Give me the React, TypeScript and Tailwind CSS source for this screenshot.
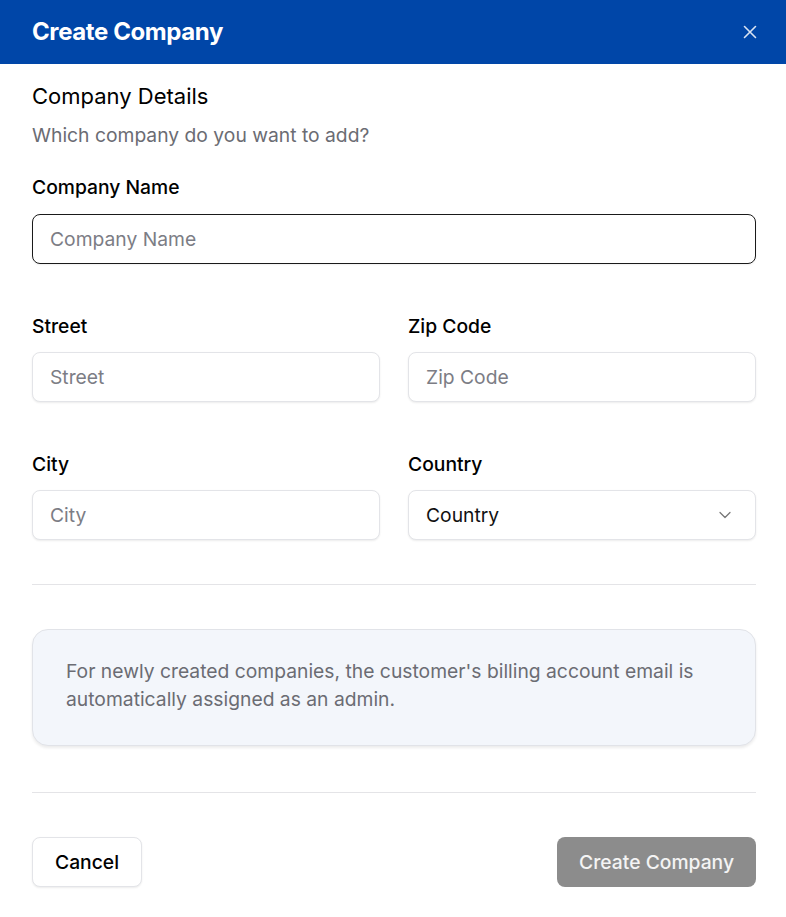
import { ChevronDown } from 'lucide-react';

function Field({ label, placeholder, focused }: { label: string; placeholder: string; focused?: boolean }) {
  return (
    <div className="flex flex-col">
      <label className="text-[19.3px] leading-[24px] font-medium text-black">{label}</label>
      <input
        type="text"
        placeholder={placeholder}
        className={
          focused
            ? 'mt-[15px] h-[50px] w-full rounded-lg border border-[#1a1a1a] bg-white px-[17px] text-[19.3px] text-black outline-none placeholder:text-[#7c7d85] shadow-[0_1px_2px_rgba(0,0,0,0.06)]'
            : 'mt-[14px] h-[50px] w-full rounded-lg border border-[#e3e4e8] bg-white px-[17px] text-[19.3px] text-black outline-none placeholder:text-[#7c7d85] shadow-[0_1px_2px_rgba(0,0,0,0.08)]'
        }
      />
    </div>
  );
}

export default function App() {
  return (
    <div className="min-h-[917px] w-[786px] bg-white" style={{ fontFamily: 'Inter, "Noto Sans", sans-serif' }}>
      {/* Header */}
      <div className="flex h-16 items-center justify-between bg-[#0046a8] pl-8 pr-[24px]">
        <h1 className="text-[24px] font-bold tracking-[-0.4px] text-white">Create Company</h1>
        <button aria-label="Close" className="flex h-6 w-6 items-center justify-center text-white/85">
          <svg width="14" height="14" viewBox="0 0 14 14" fill="none" stroke="currentColor" strokeWidth="1.6" strokeLinecap="round">
            <path d="M1.5 1.5l11 11M12.5 1.5l-11 11" />
          </svg>
        </button>
      </div>

      <div className="pl-8 pr-[30px]">
        <h2 className="mt-[18px] text-[22px] leading-[28px] font-normal text-black">Company Details</h2>
        <p className="mt-[13px] text-[19.3px] leading-[24px] text-[#6b6c73]">Which company do you want to add?</p>

        <div className="mt-[28px]">
          <Field label="Company Name" placeholder="Company Name" focused />
        </div>

        <div className="mt-[50px] grid grid-cols-2 gap-x-[28px] gap-y-[50px]">
          <Field label="Street" placeholder="Street" />
          <Field label="Zip Code" placeholder="Zip Code" />
          <Field label="City" placeholder="City" />
          <div className="flex flex-col">
            <label className="text-[19.3px] leading-[24px] font-medium text-black">Country</label>
            <button className="mt-[14px] flex h-[50px] w-full items-center justify-between rounded-lg border border-[#e3e4e8] bg-white pl-[17px] pr-[20px] text-[19.3px] text-[#111] shadow-[0_1px_2px_rgba(0,0,0,0.08)]">
              <span>Country</span>
              <ChevronDown className="h-5 w-5 text-[#777]" strokeWidth={1.5} />
            </button>
          </div>
        </div>

        <div className="mt-[44px] h-px bg-[#e4e4e7]" />

        <div className="mt-[44px] rounded-2xl border border-[#e1e3e8] bg-[#f3f6fb] px-[33px] pt-[27px] pb-[32px] shadow-[0_2px_3px_rgba(0,0,0,0.08)]">
          <p className="text-[19.3px] leading-[28px] text-[#6b6c73]">
            For newly created companies, the customer's billing account email is automatically assigned as an admin.
          </p>
        </div>

        <div className="mt-[46px] h-px bg-[#e4e4e7]" />

        <div className="mt-[44px] flex items-center justify-between">
          <button className="h-[50px] rounded-lg border border-[#e3e4e8] bg-white px-[22px] text-[19.3px] font-medium text-black shadow-[0_1px_2px_rgba(0,0,0,0.08)]">
            Cancel
          </button>
          <button className="h-[50px] rounded-lg bg-[#8c8c8c] px-[22px] text-[19.3px] font-medium text-white/90">
            Create Company
          </button>
        </div>
      </div>
    </div>
  );
}
